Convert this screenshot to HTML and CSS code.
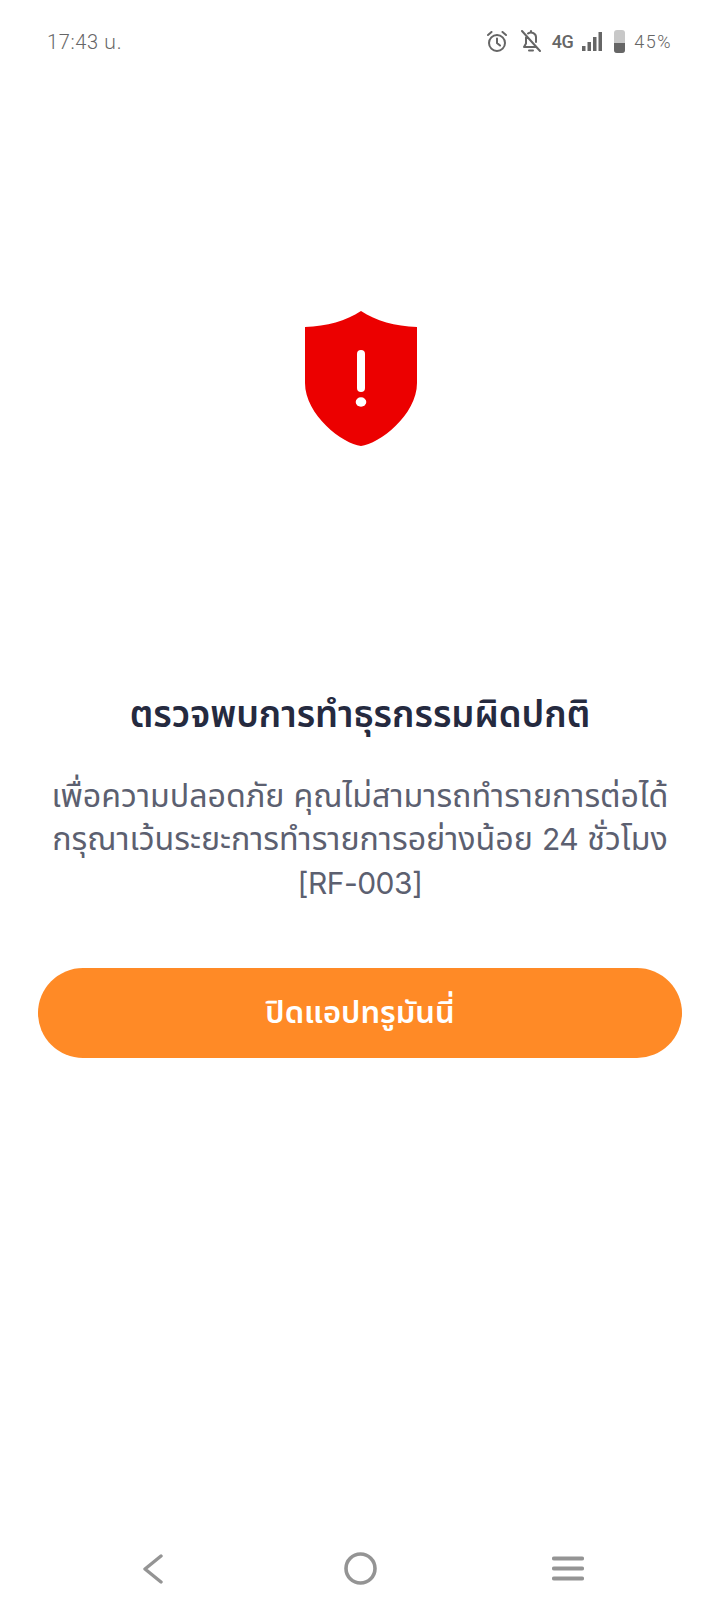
FILE: index.html
```html
<!DOCTYPE html>
<html lang="th">
<head>
<meta charset="utf-8">
<title>ตรวจพบการทำธุรกรรมผิดปกติ</title>
<link rel="stylesheet" href="styles.css">
</head>
<body>
<div class="screen">
  <header class="status">
    <span class="time">17:43 น.</span>
    <div class="status-right">
      <svg class="alarm" width="20" height="21" viewBox="0 0 20 21" fill="none" stroke="#666" stroke-width="2" stroke-linecap="round"><circle cx="10" cy="12" r="8"/><path d="M10 7.5V12l3 2.5M1 4l3.5-3M19 4l-3.5-3"/></svg>
      <svg class="bell" width="20" height="22" viewBox="0 0 20 22" fill="none" stroke="#666" stroke-width="2" stroke-linecap="round" stroke-linejoin="round"><path d="M5 7.5V13.5L3 17H14.5M7 3.5a5 5 0 0 1 8 4.500V12M10 1v1M8 20.500h4M1 1l18 20"/></svg>
      <span class="net">4G</span>
      <svg class="sig" width="20" height="19" viewBox="0 0 20 19" fill="#666"><rect x="0" y="14" width="3.500" height="5"/><rect x="5.500" y="10" width="3.500" height="9"/><rect x="11" y="5" width="3.500" height="14"/><rect x="16.500" y="0" width="3.500" height="19"/></svg>
      <svg class="bat" width="11" height="23" viewBox="0 0 11 23"><rect width="11" height="23" rx="3" fill="#c8c8c8"/><path d="M0 13h11v7a3 3 0 0 1-3 3H3a3 3 0 0 1-3-3z" fill="#666"/></svg>
      <span class="pct">45%</span>
    </div>
  </header>

  <main class="content">
    <svg class="shield" width="112" height="135" viewBox="0 0 112 135">
      <path d="M56 0C41 10 22 15 0 16V72C0 104 38 133 56 135C74 133 112 104 112 72V16C90 15 71 10 56 0Z" fill="#ec0000"/>
      <rect x="52" y="39" width="8" height="42" rx="4" fill="#fff"/>
      <ellipse cx="56" cy="91" rx="5.300" ry="4.700" fill="#fff"/>
    </svg>
    <h1 class="title">ตรวจพบการทำธุรกรรมผิดปกติ</h1>
    <p class="desc">เพื่อความปลอดภัย คุณไม่สามารถทำรายการต่อได้<br>กรุณาเว้นระยะการทำรายการอย่างน้อย <span class="latin">24</span> ชั่วโมง<br><span class="latin">[RF-003]</span></p>
    <button class="cta">ปิดแอปทรูมันนี่</button>
  </main>

  <nav class="navbar">
    <svg width="20" height="30" viewBox="0 0 20 30" fill="none" stroke="#949494" stroke-width="3.400" stroke-linecap="round" stroke-linejoin="round"><path d="M18 2L2 15l16 13"/></svg>
    <svg width="33" height="33" viewBox="0 0 33 33" fill="none" stroke="#949494" stroke-width="3.600"><circle cx="16.500" cy="16.500" r="14.500"/></svg>
    <svg width="32" height="25" viewBox="0 0 32 25" fill="none" stroke="#949494" stroke-width="4.200" stroke-linecap="round"><path d="M2 2.500h28M2 12.500h28M2 22.500h28"/></svg>
  </nav>
</div>
</body>
</html>
```

FILE: styles.css
```css
* { box-sizing: border-box; }
html, body { margin: 0; padding: 0; background: #fff; }
.screen {
  width: 720px;
  height: 1608px;
  display: flex;
  flex-direction: column;
  font-family: "Inter", "Noto Sans", "DejaVu Sans", "Noto Sans Thai", "Noto Sans Thai Looped", sans-serif;
  background: #fff;
}
.status {
  height: 82px;
  padding: 0 48px 0 47px;
  display: flex;
  align-items: center;
  justify-content: space-between;
  color: #666;
}
.time { padding-top: 3px; font-size: 20px; font-family: "Roboto", "Noto Sans Thai", sans-serif; font-weight: 300; letter-spacing: 0.6px; }
.status-right { display: flex; align-items: center; }
.alarm { margin-right: 14px; }
.bell { margin-right: 11px; }
.net { margin-right: 9px; font-size: 18px; font-weight: 500; font-family: "Roboto", sans-serif; letter-spacing: -0.5px; }
.sig { margin-right: 12px; }
.bat { margin-right: 9px; }
.pct { font-size: 18px; font-family: "Roboto", sans-serif; font-weight: 300; letter-spacing: 1.5px; }
.content {
  flex: 1;
  display: flex;
  flex-direction: column;
  align-items: center;
  padding: 229px 38px 0;
}
.shield { display: block; margin-left: 2px; }
.title {
  margin: 246px 0 0;
  font-size: 36.4px;
  line-height: 44px;
  font-weight: 600;
  color: #252a3f;
  text-align: center;
}
.desc {
  margin: 38px 0 0;
  font-size: 32.2px;
  line-height: 43px;
  font-weight: 400;
  color: #5c6070;
  text-align: center;
  white-space: nowrap;
}
.latin { font-size: 30px; font-weight: 400; letter-spacing: -0.5px; }
.cta {
  margin-top: 63px;
  width: 644px;
  height: 90px;
  border: 0;
  border-radius: 45px;
  background: #ff8a26;
  color: #fff;
  font: inherit;
  font-size: 31px;
  font-weight: 600;
}
.navbar {
  height: 86px;
  padding: 7px 0 0 49px;
  display: grid;
  grid-template-columns: repeat(3, 207.5px);
  justify-items: center;
  align-items: center;
}
```
